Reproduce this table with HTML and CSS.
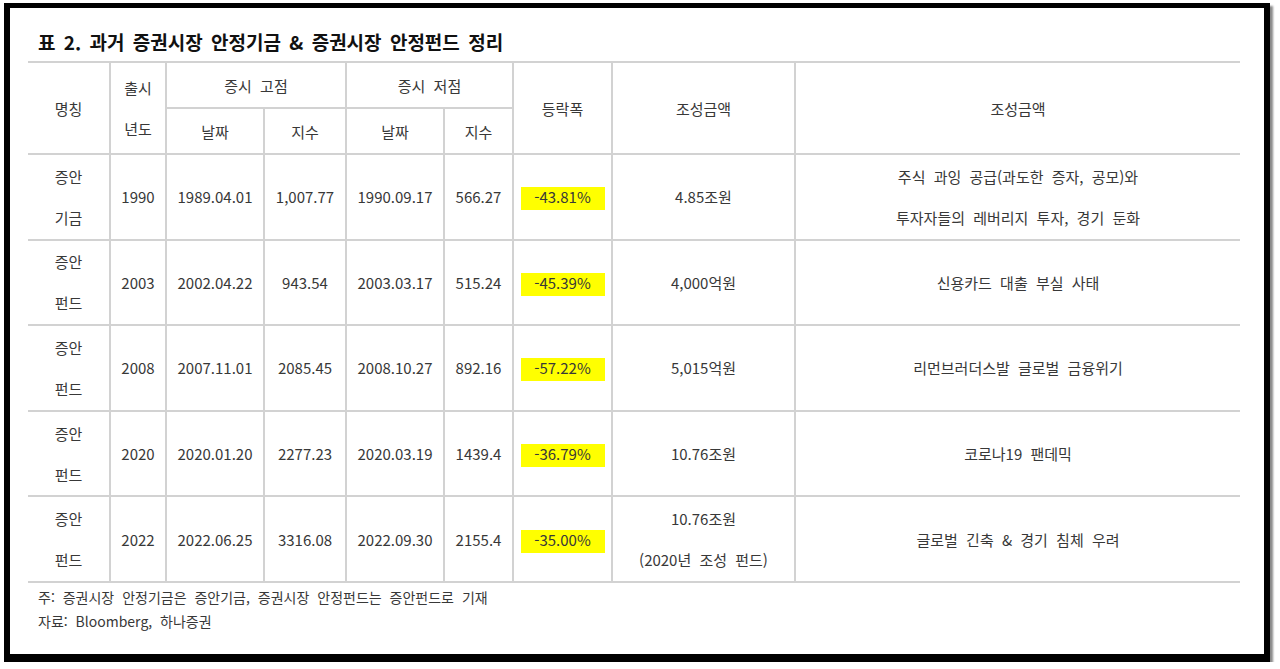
FILE: index.html
```html
<!DOCTYPE html>
<html lang="ko">
<head>
<meta charset="utf-8">
<title>표 2. 과거 증권시장 안정기금 &amp; 증권시장 안정펀드 정리</title>
<link rel="stylesheet" href="styles.css">
</head>
<body>
<div class="frame">
  <div class="sheet">
    <h1 class="title">표 2. 과거 증권시장 안정기금 &amp; 증권시장 안정펀드 정리</h1>
    <table class="tbl">
      <colgroup>
        <col class="c-name"><col class="c-year"><col class="c-date"><col class="c-idx">
        <col class="c-date"><col class="c-idx2"><col class="c-chg"><col class="c-amt"><col class="c-why">
      </colgroup>
      <thead>
        <tr class="hr1">
          <th rowspan="2">명칭</th>
          <th rowspan="2">출시<br>년도</th>
          <th colspan="2">증시 고점</th>
          <th colspan="2">증시 저점</th>
          <th rowspan="2">등락폭</th>
          <th rowspan="2">조성금액</th>
          <th rowspan="2">조성금액</th>
        </tr>
        <tr class="hr2">
          <th>날짜</th><th>지수</th><th>날짜</th><th>지수</th>
        </tr>
      </thead>
      <tbody>
        <tr>
          <td>증안<br>기금</td><td>1990</td><td>1989.04.01</td><td>1,007.77</td><td>1990.09.17</td><td>566.27</td>
          <td><span class="mark">-43.81%</span></td><td>4.85조원</td>
          <td>주식 과잉 공급(과도한 증자, 공모)와<br>투자자들의 레버리지 투자, 경기 둔화</td>
        </tr>
        <tr>
          <td>증안<br>펀드</td><td>2003</td><td>2002.04.22</td><td>943.54</td><td>2003.03.17</td><td>515.24</td>
          <td><span class="mark">-45.39%</span></td><td>4,000억원</td>
          <td>신용카드 대출 부실 사태</td>
        </tr>
        <tr>
          <td>증안<br>펀드</td><td>2008</td><td>2007.11.01</td><td>2085.45</td><td>2008.10.27</td><td>892.16</td>
          <td><span class="mark">-57.22%</span></td><td>5,015억원</td>
          <td>리먼브러더스발 글로벌 금융위기</td>
        </tr>
        <tr>
          <td>증안<br>펀드</td><td>2020</td><td>2020.01.20</td><td>2277.23</td><td>2020.03.19</td><td>1439.4</td>
          <td><span class="mark">-36.79%</span></td><td>10.76조원</td>
          <td>코로나19 팬데믹</td>
        </tr>
        <tr>
          <td>증안<br>펀드</td><td>2022</td><td>2022.06.25</td><td>3316.08</td><td>2022.09.30</td><td>2155.4</td>
          <td><span class="mark">-35.00%</span></td><td>10.76조원<br>(2020년 조성 펀드)</td>
          <td>글로벌 긴축 &amp; 경기 침체 우려</td>
        </tr>
      </tbody>
    </table>
    <div class="notes">
      <p>주: 증권시장 안정기금은 증안기금, 증권시장 안정펀드는 증안펀드로 기재</p>
      <p>자료: Bloomberg, 하나증권</p>
    </div>
  </div>
</div>
</body>
</html>
```
FILE: styles.css
```css
html, body {
  margin: 0;
  padding: 0;
  background: #ffffff;
}

body {
  font-family: "Noto Sans CJK KR", "Noto Sans", sans-serif;
  color: #383838;
}

.frame {
  box-sizing: border-box;
  width: 1266px;
  height: 659px;
  margin: 3px 0 0 4px;
  border-style: solid;
  border-color: #000000;
  border-width: 5px 6px 8px 6px;
  box-shadow: 3px 3px 2px #8a8a8a;
  background: #ffffff;
}

.sheet {
  padding: 20px 24px 0 18px;
}

.title {
  margin: 0 0 6px 10px;
  font-size: 19px;
  line-height: 27px;
  font-weight: 700;
  color: #111111;
  word-spacing: 3px;
}

.tbl {
  width: 1212px;
  table-layout: fixed;
  border-collapse: collapse;
  border-top: 2px solid #cfcfcf;
  border-bottom: 2px solid #cfcfcf;
  font-size: 15px;
  line-height: 41px;
  word-spacing: 4px;
  color: #383838;
}

.c-name { width: 82px; }
.c-year { width: 56px; }
.c-date { width: 98px; }
.c-idx { width: 82px; }
.c-idx2 { width: 69px; }
.c-chg { width: 99px; }
.c-amt { width: 183px; }
.c-why { width: 445px; }

.tbl th,
.tbl td {
  padding: 0;
  text-align: center;
  vertical-align: middle;
  font-weight: 400;
  border: 2px solid #d2d2d2;
  white-space: nowrap;
}

.tbl th:first-child,
.tbl td:first-child {
  border-left: none;
}

.tbl th:last-child,
.tbl td:last-child {
  border-right: none;
}

.tbl .hr2 th:last-child {
  border-right: 2px solid #d2d2d2;
}

.hr1 th,
.hr2 th {
  height: 44px;
}

.tbl tbody tr {
  height: 85.6px;
}

.mark {
  display: inline-block;
  width: 84px;
  line-height: 20px;
  padding: 0 0 3px;
  margin-top: 6px;
  word-spacing: 0;
  background: #ffff00;
}

.notes {
  margin: 2px 0 0 10px;
  font-size: 14px;
  line-height: 24px;
  word-spacing: 4px;
  color: #383838;
}

.notes p {
  margin: 0;
}
```
